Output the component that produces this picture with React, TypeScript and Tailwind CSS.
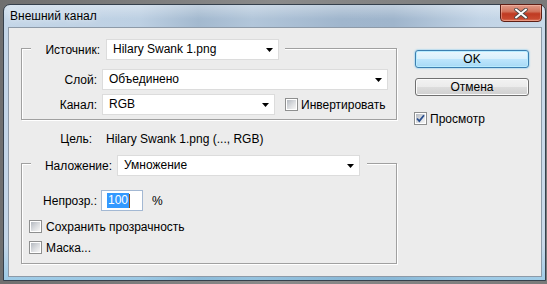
import React from "react";

function Arrow() {
  return (
    <svg width="7" height="4" viewBox="0 0 7 4" className="shrink-0">
      <path d="M0 0H7L3.5 4Z" fill="#000" />
    </svg>
  );
}

function Dropdown({ text, w }: { text: string; w: string }) {
  return (
    <div
      className={`${w} h-[21px] bg-white border border-[#dcdcdc] flex items-center justify-between pl-[6px] pr-[5px] shrink-0`}
    >
      <span className="whitespace-nowrap leading-[15px]">{text}</span>
      <Arrow />
    </div>
  );
}

function Check({ checked }: { checked?: boolean }) {
  return (
    <div className="relative w-[13px] h-[13px] border border-[#8e8f8f] bg-white p-px shrink-0">
      <div className="w-full h-full bg-[linear-gradient(135deg,#b4b9c0_0%,#dcdee1_55%,#f6f6f6_100%)]" />
      {checked && (
        <svg className="absolute left-0 top-0" width="11" height="11" viewBox="0 0 11 11">
          <path d="M2 5.5 L4.3 8 L9 2.2" stroke="#2a4f8e" strokeWidth="1.8" fill="none" />
        </svg>
      )}
    </div>
  );
}

export default function App() {
  return (
    <div className="w-[547px] h-[284px] bg-[linear-gradient(90deg,#6f6f6f,#8a8a8a_50%,#7a7a7a)] pl-[3px] pt-[4px] font-['Liberation_Sans',Arial,sans-serif] text-[12px] text-black overflow-hidden">
      <div className="w-[543px] h-[277px] rounded-t-[7px] border border-[#35404c] bg-[linear-gradient(180deg,rgba(255,255,255,0.35)_0px,rgba(255,255,255,0)_14px,rgba(255,255,255,0)_240px,rgba(110,190,230,0.45)_275px),linear-gradient(90deg,#c4d6e8_0%,#bdd0e3_25%,#a3b9cf_36%,#b2c6da_46%,#a0b6cd_62%,#9fb5cc_72%,#c2d4e6_88%,#c9d9e9_100%)] flex flex-col pl-[4px] pr-[3px] pb-[3px]">
        {/* title bar */}
        <div className="h-[22px] flex items-start shrink-0">
          <span className="ml-[2px] mt-[4px] leading-[15px] whitespace-nowrap [text-shadow:0_0_6px_rgba(255,255,255,0.9)]">
            Внешний канал
          </span>
          <div className="ml-auto -mt-px h-[18px] w-[42px] rounded-b-[4px] border border-[#5e1f16] bg-[linear-gradient(180deg,#e09a88_0%,#d2745c_40%,#bf3a22_55%,#c8492f_85%,#dc7a5f_100%)] flex items-center justify-center shadow-[inset_0_0_0_1px_rgba(255,200,185,0.45)]">
            <svg width="14" height="11" viewBox="0 0 14 11">
              <path d="M2 1.5 L12 9.5 M12 1.5 L2 9.5" stroke="#4a4a4a" strokeWidth="3.6" strokeLinecap="round" />
              <path d="M2 1.5 L12 9.5 M12 1.5 L2 9.5" stroke="#ffffff" strokeWidth="2" strokeLinecap="round" />
            </svg>
          </div>
        </div>
        {/* content */}
        <div className="flex-1 bg-[#ececec] border border-[#8d9aa8] flex">
          {/* left column */}
          <div className="ml-[12px] w-[377px] flex flex-col">
            {/* group 1 */}
            <div className="mt-[20px] w-[376px] border border-[#a0a0a0] shadow-[inset_1px_1px_0_#fff,1px_1px_0_#fff] pb-[4px]">
              <div className="-mt-[10px] ml-[9px] pl-[12px] pr-[6px] bg-[#ececec] flex w-fit items-center h-[21px]">
                <span className="w-[57px] text-right whitespace-nowrap">Источник:</span>
                <div className="ml-[6px]">
                  <Dropdown w="w-[173px]" text="Hilary Swank 1.png" />
                </div>
              </div>
              <div className="mt-[9px] flex items-center h-[21px]">
                <span className="w-[75px] text-right whitespace-nowrap">Слой:</span>
                <div className="ml-[5px]">
                  <Dropdown w="w-[286px]" text="Объединено" />
                </div>
              </div>
              <div className="mt-[4px] flex items-center h-[21px]">
                <span className="w-[75px] text-right whitespace-nowrap">Канал:</span>
                <div className="ml-[5px]">
                  <Dropdown w="w-[173px]" text="RGB" />
                </div>
                <div className="ml-[10px]">
                  <Check />
                </div>
                <span className="ml-[3px] whitespace-nowrap">Инвертировать</span>
              </div>
            </div>
            {/* target */}
            <div className="mt-[12px] flex items-center h-[14px]">
              <span className="w-[71px] text-right whitespace-nowrap">Цель:</span>
              <span className="ml-[14px] whitespace-nowrap">Hilary Swank 1.png (..., RGB)</span>
            </div>
            {/* group 2 */}
            <div className="mt-[17px] w-[376px] border border-[#a0a0a0] shadow-[inset_1px_1px_0_#fff,1px_1px_0_#fff] pb-[9px]">
              <div className="-mt-[9px] ml-[9px] pl-[12px] pr-[7px] bg-[#ececec] flex w-fit items-center h-[21px]">
                <span className="w-[69px] text-right whitespace-nowrap">Наложение:</span>
                <div className="ml-[5px]">
                  <Dropdown w="w-[243px]" text="Умножение" />
                </div>
              </div>
              <div className="mt-[14px] flex items-center h-[21px]">
                <span className="w-[75px] text-right whitespace-nowrap">Непрозр.:</span>
                <div className="ml-[4px] w-[42px] h-[21px] bg-white border border-[#a3b8d3] flex items-center pl-[5px]">
                  <span className="bg-[#3399ff] text-white leading-[15px] px-px">100</span>
                  <span className="w-px h-[14px] bg-[#8a4a10]" />
                </div>
                <span className="ml-[9px]">%</span>
              </div>
              <div className="mt-[9px] ml-[7px] flex items-center h-[13px]">
                <Check />
                <span className="ml-[4px] whitespace-nowrap">Сохранить прозрачность</span>
              </div>
              <div className="mt-[8px] ml-[7px] flex items-center h-[13px]">
                <Check />
                <span className="ml-[4px] whitespace-nowrap">Маска...</span>
              </div>
            </div>
          </div>
          {/* right column */}
          <div className="ml-[17px] mt-[22px] w-[114px] flex flex-col">
            <div className="h-[18px] w-[114px] rounded-[3px] border border-[#3c7fb1] bg-[linear-gradient(180deg,#eaf6fd_0%,#d9f0fc_50%,#bee6fd_50%,#a7d9f5_100%)] shadow-[inset_0_0_0_1px_#b8ecff,0_0_2px_#4fb8ee] flex items-center justify-center leading-[14px]">
              OK
            </div>
            <div className="mt-[10px] h-[18px] w-[114px] rounded-[3px] border border-[#707070] bg-[linear-gradient(180deg,#f2f2f2_0%,#ebebeb_50%,#dddddd_50%,#cfcfcf_100%)] shadow-[inset_0_0_0_1px_#fcfcfc] flex items-center justify-center leading-[14px]">
              Отмена
            </div>
            <div className="mt-[16px] -ml-px flex items-center h-[13px]">
              <Check checked />
              <span className="ml-[3px] whitespace-nowrap">Просмотр</span>
            </div>
          </div>
        </div>
      </div>
    </div>
  );
}
